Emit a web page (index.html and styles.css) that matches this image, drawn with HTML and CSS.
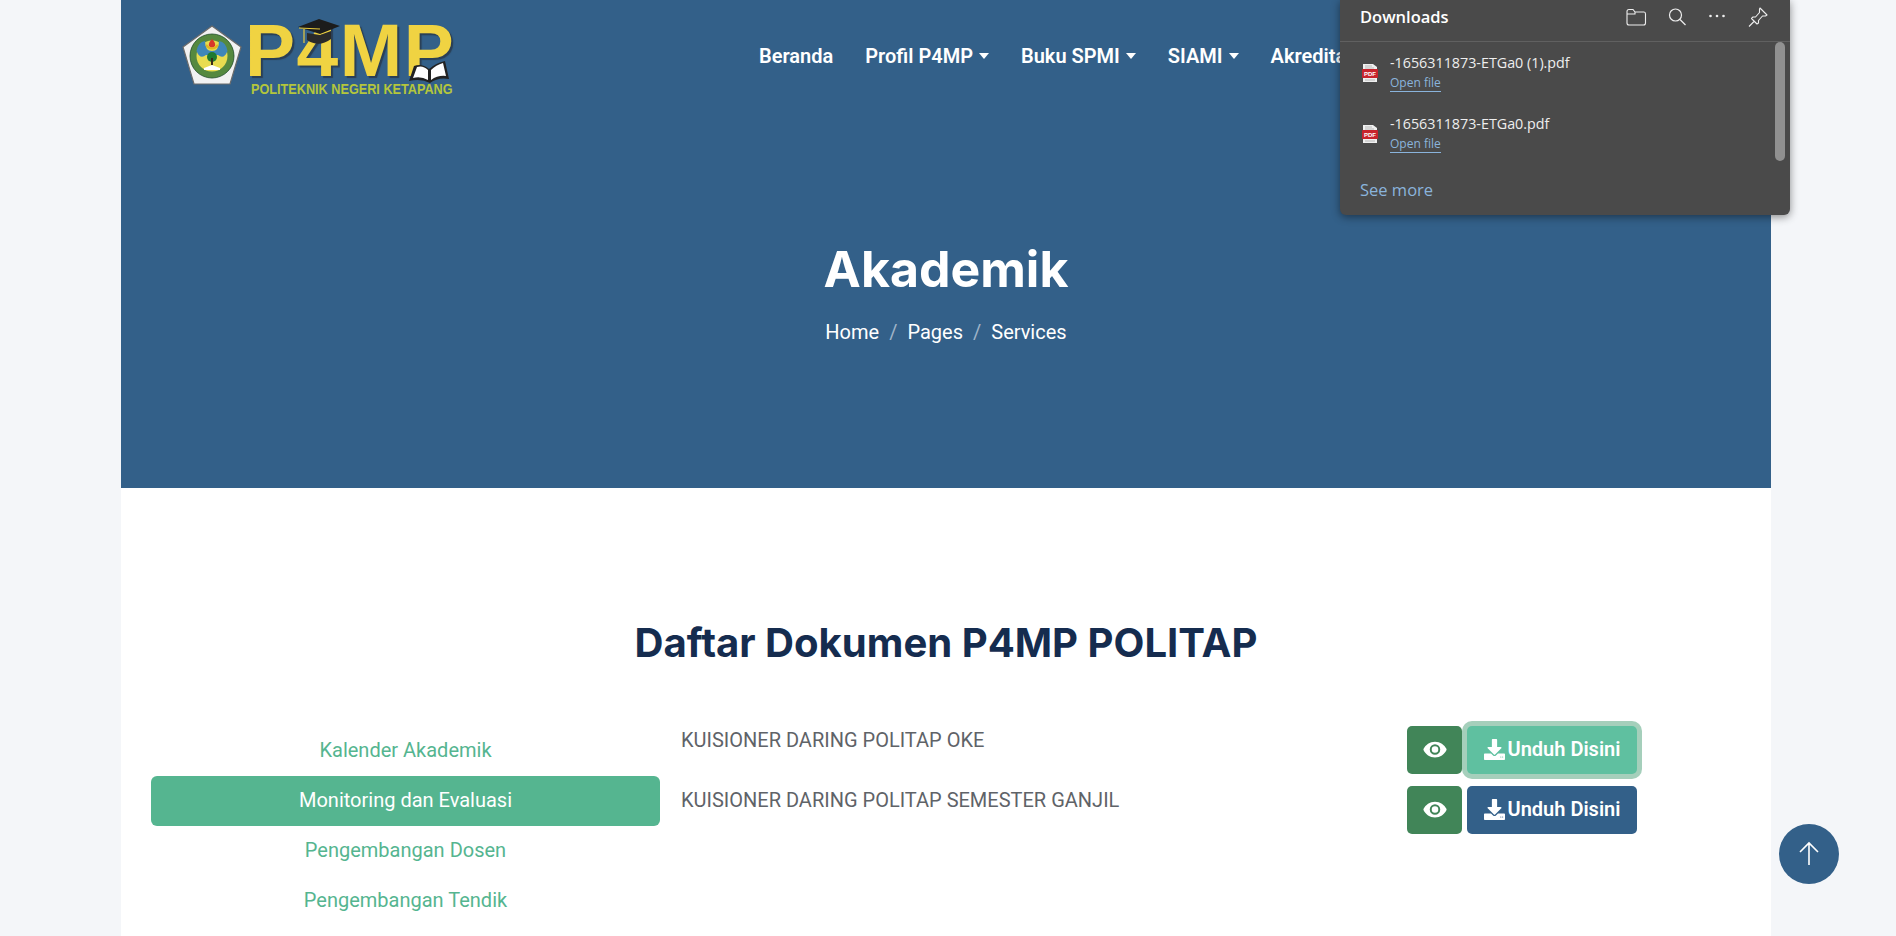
FILE: index.html
```html
<!DOCTYPE html>
<html lang="id">
<head>
<meta charset="utf-8">
<title>Akademik - P4MP</title>
<link rel="stylesheet" href="styles.css">
</head>
<body>
<div class="page">
  <section class="hero">
    <header class="topbar">
      <a class="logo">
        <svg class="emblem" viewBox="0 0 62 62" width="62" height="62">
          <path d="M31 1 L60 22 L49 59 L13 59 L2 22 Z" fill="#f2f2f2" stroke="#6b6b6b" stroke-width="1.2"/>
          <circle cx="31" cy="31" r="22" fill="#55893f"/>
          <circle cx="31" cy="31" r="22" fill="none" stroke="#1f4d2a" stroke-width=".8"/>
          <circle cx="31" cy="31" r="15.5" fill="#e8dc50"/>
          <path d="M15.5 26 Q17 17 24 16 Q24 26 31 26 Q38 26 38 16 Q45 17 46.5 26 Q43 35 37 30 L25 30 Q19 35 15.5 26 Z" fill="#3f86b8"/>
          <path d="M31 14 Q27 18 28 21 Q31 24 34 21 Q35 18 31 14 Z" fill="#d8382a"/>
          <path d="M25 20 Q31 27 37 20" fill="none" stroke="#e3b51f" stroke-width="2"/>
          <circle cx="31" cy="32" r="5" fill="#1f7a30"/>
          <rect x="30" y="33" width="2" height="7" fill="#3a2a1a"/>
          <path d="M23 43 L31 40 L39 43 L39 45 L23 45 Z" fill="#fff"/>
        </svg>
        <div class="wordmark">
          <div class="letters">P4MP</div>
          <div class="tagline">POLITEKNIK NEGERI KETAPANG</div>
          <svg class="cap" viewBox="0 0 44 27" width="44" height="27">
            <path d="M22 0 L43 7 L23 15 L1 8 Z" fill="#1c1c1c"/>
            <path d="M10 14 L10 21 Q22 29 34 20 L34 12 L23 16 Z" fill="#2a2a2a"/>
            <path d="M2 9 L23 10 M7 10 L7 24" stroke="#e6c93c" stroke-width="1.2" fill="none"/>
          </svg>
          <svg class="book" viewBox="0 0 42 24" width="42" height="24">
            <path d="M1 21 L6 6 Q14 3 21 9 Q28 3 37 1 L41 19 Q30 17 22 23 Q13 18 1 21 Z" fill="#222"/>
            <path d="M5 18 L9 7 Q15 5 20 10 L20 20 Q13 16 5 18 Z" fill="#fff"/>
            <path d="M23 10 Q28 5 35 3 L38 16 Q30 15 23 20 Z" fill="#fff"/>
          </svg>
        </div>
      </a>
      <nav class="nav">
        <a class="nav-link">Beranda</a>
        <a class="nav-link has-caret">Profil P4MP</a>
        <a class="nav-link has-caret">Buku SPMI</a>
        <a class="nav-link has-caret">SIAMI</a>
        <a class="nav-link">Akreditasi</a>
      </nav>
    </header>
    <div class="hero-body">
      <h1 class="hero-title">Akademik</h1>
      <ol class="crumbs">
        <li>Home</li>
        <li class="sep">/</li>
        <li>Pages</li>
        <li class="sep">/</li>
        <li>Services</li>
      </ol>
    </div>
  </section>
  <main class="content">
    <h2 class="section-title">Daftar Dokumen P4MP POLITAP</h2>
    <div class="columns">
      <ul class="tabs">
        <li class="tab">Kalender Akademik</li>
        <li class="tab active">Monitoring dan Evaluasi</li>
        <li class="tab">Pengembangan Dosen</li>
        <li class="tab">Pengembangan Tendik</li>
      </ul>
      <div class="docs">
        <div class="doc">
          <div class="doc-name">KUISIONER DARING POLITAP OKE</div>
          <div class="doc-actions">
            <a class="btn btn-view"><svg viewBox="0 0 576 512" width="24" height="21"><path fill="#fff" d="M288 64C160 64 58 140 10 240a32 32 0 0 0 0 32c48 100 150 176 278 176s230-76 278-176a32 32 0 0 0 0-32C518 140 416 64 288 64zm0 320a128 128 0 1 1 0-256 128 128 0 0 1 0 256zm0-208a80 80 0 1 0 0 160 80 80 0 0 0 0-160z"/></svg></a>
            <a class="btn btn-down focus"><svg viewBox="0 0 512 512" width="21" height="21"><path fill="#fff" d="M216 0h80c13 0 24 11 24 24v168h88c18 0 27 21 14 34L270 378c-8 8-20 8-28 0L90 226c-13-13-4-34 14-34h88V24c0-13 11-24 24-24zM512 376v112c0 13-11 24-24 24H24c-13 0-24-11-24-24V376c0-13 11-24 24-24h147l49 49c20 20 52 20 72 0l49-49h147c13 0 24 11 24 24z"/><circle cx="410" cy="440" r="14" fill="#5fc0a0"/><circle cx="455" cy="440" r="14" fill="#5fc0a0"/></svg>Unduh Disini</a>
          </div>
        </div>
        <div class="doc">
          <div class="doc-name">KUISIONER DARING POLITAP SEMESTER GANJIL</div>
          <div class="doc-actions">
            <a class="btn btn-view"><svg viewBox="0 0 576 512" width="24" height="21"><path fill="#fff" d="M288 64C160 64 58 140 10 240a32 32 0 0 0 0 32c48 100 150 176 278 176s230-76 278-176a32 32 0 0 0 0-32C518 140 416 64 288 64zm0 320a128 128 0 1 1 0-256 128 128 0 0 1 0 256zm0-208a80 80 0 1 0 0 160 80 80 0 0 0 0-160z"/></svg></a>
            <a class="btn btn-down"><svg viewBox="0 0 512 512" width="21" height="21"><path fill="#fff" d="M216 0h80c13 0 24 11 24 24v168h88c18 0 27 21 14 34L270 378c-8 8-20 8-28 0L90 226c-13-13-4-34 14-34h88V24c0-13 11-24 24-24zM512 376v112c0 13-11 24-24 24H24c-13 0-24-11-24-24V376c0-13 11-24 24-24h147l49 49c20 20 52 20 72 0l49-49h147c13 0 24 11 24 24z"/><circle cx="410" cy="440" r="14" fill="#336089"/><circle cx="455" cy="440" r="14" fill="#336089"/></svg>Unduh Disini</a>
          </div>
        </div>
      </div>
    </div>
  </main>
</div>

<aside class="dl-panel">
  <div class="dl-head">
    <span class="dl-title">Downloads</span>
    <div class="dl-tools">
      <svg viewBox="0 0 22 20" width="22" height="20"><path d="M2 4.5 Q2 2.5 4 2.5 H8 L10 5 H19 Q20.5 5 20.5 7 V16 Q20.5 18 18.5 18 H4 Q2 18 2 16 Z M2 7 H10 L10 5" fill="none" stroke="#eee" stroke-width="1.1"/></svg>
      <svg viewBox="0 0 20 20" width="20" height="20"><circle cx="8.5" cy="8" r="6" fill="none" stroke="#eee" stroke-width="1.2"/><path d="M13 12.5 L18.5 18" stroke="#eee" stroke-width="1.2"/></svg>
      <svg viewBox="0 0 20 20" width="20" height="20"><circle cx="3.5" cy="9" r="1.3" fill="#eee"/><circle cx="10" cy="9" r="1.3" fill="#eee"/><circle cx="16.5" cy="9" r="1.3" fill="#eee"/></svg>
      <svg viewBox="0 0 22 22" width="22" height="22"><path d="M13 2 L20 9 L18.5 10 L15.5 10 L11.5 14.5 L11.5 17 L10 18 L4.5 12.5 L6 11 L8.5 11 L12.5 6.5 L12.5 3 Z M7 15.5 L2 20.5" fill="none" stroke="#eee" stroke-width="1.1" stroke-linejoin="round"/></svg>
    </div>
  </div>
  <div class="dl-list">
    <div class="dl-item">
      <svg class="pdf" viewBox="0 0 16 20" width="16" height="20"><path d="M1 1 H11 L15 4 V19 H1 Z" fill="#f0f0f0"/><path d="M3 3h7M3 5h9M3 17h10" stroke="#aaa" stroke-width=".8"/><rect x="0" y="6" width="16" height="9" rx="1" fill="#c8232c"/><text x="8" y="13" class="pdf-label">PDF</text></svg>
      <div class="dl-text"><div class="dl-name">-1656311873-ETGa0 (1).pdf</div><a class="dl-open">Open file</a></div>
    </div>
    <div class="dl-item">
      <svg class="pdf" viewBox="0 0 16 20" width="16" height="20"><path d="M1 1 H11 L15 4 V19 H1 Z" fill="#f0f0f0"/><path d="M3 3h7M3 5h9M3 17h10" stroke="#aaa" stroke-width=".8"/><rect x="0" y="6" width="16" height="9" rx="1" fill="#c8232c"/><text x="8" y="13" class="pdf-label">PDF</text></svg>
      <div class="dl-text"><div class="dl-name">-1656311873-ETGa0.pdf</div><a class="dl-open">Open file</a></div>
    </div>
  </div>
  <a class="dl-more">See more</a>
  <div class="dl-scroll"></div>
</aside>

<a class="to-top"><svg viewBox="0 0 24 28" width="24" height="28"><path d="M12 25 V3 M3 12 L12 3 L21 12" fill="none" stroke="#fff" stroke-width="1.6"/></svg></a>
</body>
</html>
```

FILE: styles.css
```css
* { box-sizing: border-box; }
html, body { margin: 0; padding: 0; height: 936px; overflow: hidden; }
body { background: #f4f6f9; font-family: Roboto, "Liberation Sans", sans-serif; }
ul, ol { list-style: none; margin: 0; padding: 0; }

.page { width: 1650px; margin-left: 121px; background: #fff; height: 936px; overflow: hidden; }

.hero { background: #336089; height: 488px; color: #fff; }
.topbar { display: flex; align-items: flex-start; height: 110px; padding: 18px 0 0 60px; }
.logo { display: flex; align-items: flex-start; gap: 2px; width: 578px; flex: none; }
.emblem { margin-top: 7px; flex: none; }
.wordmark { position: relative; width: 205px; padding-top: 2px; }
.letters { font-family: "Liberation Sans", Arial, sans-serif; font-weight: 700; font-size: 75px; line-height: 60px; height: 60px; color: #f0d342; text-shadow: 2px 2px 1px #2a3f55; letter-spacing: 1.5px; white-space: nowrap; }
.tagline { font-family: "Liberation Sans", Arial, sans-serif; font-weight: 700; font-size: 15px; line-height: 16px; color: #b4c63c; white-space: nowrap; margin: 1px 0 0 6px; transform: scaleX(.845); transform-origin: left center; }
.cap { position: absolute; left: 52px; top: 1px; }
.book { position: absolute; left: 163px; top: 42px; }

.nav { display: flex; gap: 32px; padding-top: 26px; white-space: nowrap; }
.nav-link { font-size: 20px; font-weight: 600; line-height: 24px; color: #fff; }
.has-caret::after { content: ""; display: inline-block; margin-left: 6px; vertical-align: 4px; border-top: 6px solid #fff; border-left: 5px solid transparent; border-right: 5px solid transparent; }

.hero-body { display: flex; flex-direction: column; align-items: center; padding-top: 129px; }
.hero-title { margin: 0; font-family: Inter, sans-serif; font-weight: 700; font-size: 50px; line-height: 60px; }
.crumbs { display: flex; gap: 10px; margin-top: 18px; font-size: 20px; line-height: 30px; }
.crumbs .sep { color: #9fb4c8; }

.content { padding: 0 30px; }
.section-title { margin: 0; padding-top: 131px; font-family: Inter, sans-serif; font-weight: 700; font-size: 40.1px; line-height: 48px; text-align: center; color: #152c4f; }
.columns { display: flex; margin-top: 58px; }
.tabs { width: 509px; flex: none; margin-top: 1px; }
.tab { height: 50px; line-height: 48px; text-align: center; font-size: 20px; color: #55b590; border-radius: 6px; }
.tab.active { background: #55b590; color: #fff; }

.docs { margin-left: 21px; width: 956px; margin-top: 1px; }
.doc { display: flex; justify-content: space-between; height: 60px; }
.doc-name { font-size: 20px; line-height: 24px; color: #5f6368; padding-top: 2px; }
.doc-actions { display: flex; gap: 5px; height: 48px; }

.btn { display: flex; align-items: center; justify-content: center; height: 48px; padding-bottom: 2px; border-radius: 5px; color: #fff; font-size: 20px; font-weight: 600; }
.btn svg { display: block; }
.btn-view { width: 55px; background: #418558; }
.btn-down { width: 170px; background: #336089; gap: 3px; }
.btn-down.focus { background: #5fc0a0; box-shadow: 0 0 0 5px #a5cfbb; }

.dl-panel { position: absolute; left: 1340px; top: 0; width: 450px; height: 215px; background: #4a4a4a; border-radius: 0 0 6px 6px; box-shadow: 0 2px 8px rgba(0,0,0,.45); color: #fff; }
.dl-head { display: flex; align-items: center; justify-content: space-between; height: 42px; padding: 0 20px 8px; border-bottom: 1px solid #606060; }
.dl-title { font-family: "Open Sans", sans-serif; font-weight: 600; font-size: 16.5px; }
.dl-tools { display: flex; align-items: center; gap: 20px; padding-right: 1px; }
.dl-item { display: flex; align-items: center; height: 61px; padding-left: 22px; gap: 12px; }
.pdf-label { font-family: "Liberation Sans", sans-serif; font-size: 6px; font-weight: 700; fill: #fff; text-anchor: middle; }
.dl-name { font-family: "Open Sans", sans-serif; font-size: 14.3px; line-height: 19px; color: #eee; }
.dl-open { display: inline-block; font-family: "Open Sans", sans-serif; font-size: 12px; line-height: 16px; color: #8ab4dc; border-bottom: 1px solid #8ab4dc; }
.dl-more { display: block; margin: 14px 0 0 20px; font-family: "Open Sans", sans-serif; font-size: 16.5px; color: #8ab4dc; }
.dl-scroll { position: absolute; right: 5px; top: 42px; width: 10px; height: 119px; border-radius: 5px; background: #919191; }

.to-top { position: fixed; left: 1779px; top: 824px; width: 60px; height: 60px; border-radius: 50%; background: #336089; display: flex; align-items: center; justify-content: center; }
```
